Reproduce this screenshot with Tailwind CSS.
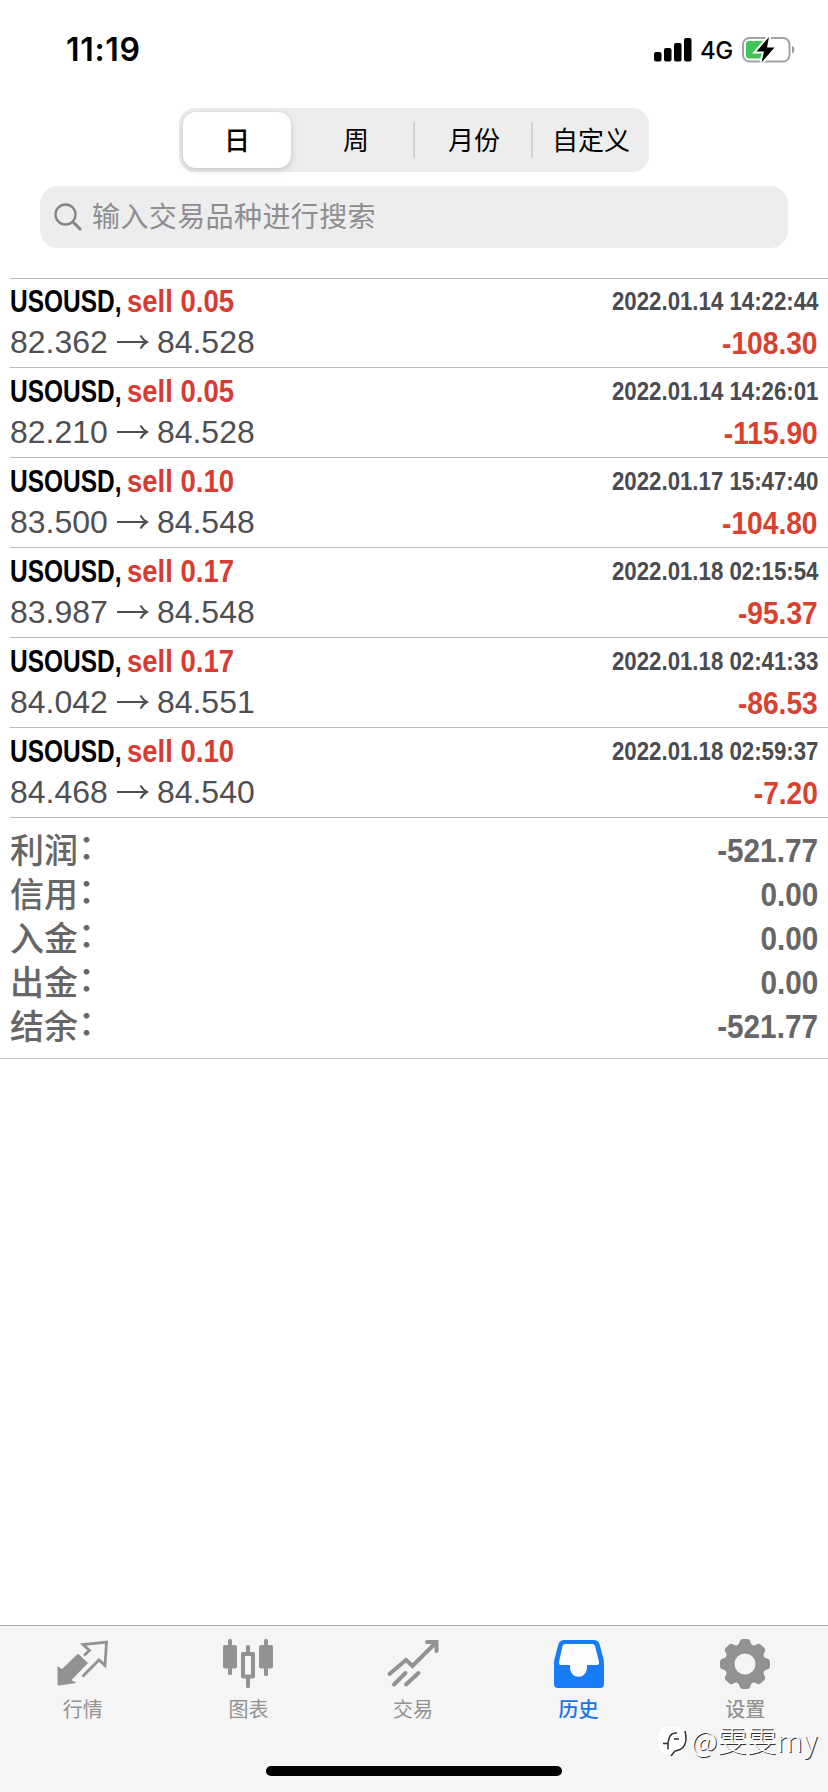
<!DOCTYPE html>
<html lang="zh-CN">
<head>
<meta charset="utf-8">
<title>历史</title>
<script src="https://cdn.jsdelivr.net/npm/@tailwindcss/browser@4"></script>
</head>
<body class="bg-white">
<div class="relative flex h-[1792px] w-[828px] flex-col overflow-hidden bg-white font-['Liberation_Sans','Noto_Sans_CJK_SC',sans-serif]">

  <!-- Status bar -->
  <header class="flex h-[108px] items-start justify-between pr-[32px] pl-[66px]">
    <div class="mt-[30px] font-['Inter',sans-serif] text-[32px] leading-[40px] font-semibold tracking-[0.7px] text-black">11:19</div>
    <div class="mt-[34px] flex h-8 items-center">
      <svg class="mr-[8px] h-[24px] w-[38px]" viewBox="0 0 38 24"><rect x="0" y="14" width="7.500" height="9.500" rx="2"/><rect x="10" y="10" width="7.500" height="13.500" rx="2"/><rect x="20" y="5" width="7.500" height="18.500" rx="2"/><rect x="30" y="0" width="7.500" height="23.500" rx="2"/></svg>
      <div class="mr-[8px] w-[34px] pt-0.5 font-['Inter',sans-serif] text-[24px] leading-8 font-medium tracking-[-0.6px] text-black">4G</div>
      <svg class="h-[28px] w-[54px]" viewBox="0 0 54 28"><rect x="1" y="2" width="46.500" height="23.500" rx="6.500" fill="white" stroke="#a2a2a2" stroke-width="2"/><path d="M7 5h15v17.500H7a3 3 0 0 1-3-3V8a3 3 0 0 1 3-3z" fill="#41c45b"/><path d="M50 10c3 .8 3 6.500 0 7.500z" fill="#999"/><path d="M27 1L14.500 15.500h7.500L19.500 26.500 32.500 11.500h-7.500z" fill="#000" stroke="#fff" stroke-width="4" paint-order="stroke"/></svg>
    </div>
  </header>

  <!-- Period selector -->
  <div class="mx-auto flex h-[64px] w-[470px] items-center rounded-[16px] bg-[#ededed] text-[26px] text-black">
    <div class="ml-[4px] flex h-[56px] w-[108px] items-center justify-center rounded-[13px] bg-white pt-0.5 font-medium shadow-[0_2px_7px_rgba(0,0,0,0.18)]">日</div>
    <div class="flex h-9 w-[124px] items-center justify-center border-r-2 border-[#d2d2d3] pt-0.5 pl-2">周</div>
    <div class="flex h-9 w-[118px] items-center justify-center border-r-2 border-[#d2d2d3] pt-0.5 pl-0.5">月份</div>
    <div class="flex h-9 w-[116px] items-center justify-center pt-0.5">自定义</div>
  </div>

  <!-- Search -->
  <div class="mx-[40px] mt-[14px] flex h-[62px] items-center rounded-[18px] bg-[#ededee] text-[#8e8e92]">
    <svg class="ml-[14px] h-[28px] w-[28px]" viewBox="0 0 28 28" fill="none" stroke="#858588" stroke-linecap="round"><circle cx="11.500" cy="11.500" r="10" stroke-width="2.300"/><path d="M19 19l7 7" stroke-width="3"/></svg>
    <span class="ml-[10px] pt-0.5 text-[28px] tracking-[0.4px]">输入交易品种进行搜索</span>
  </div>

  <!-- Deals -->
  <main id="deals" class="mt-[30px] ml-[10px] flex flex-col"></main>

  <!-- Totals -->
  <section id="totals" class="flex h-[241px] flex-col border-b border-[#c3c3c6] pt-[10px] text-[#666]"></section>

  <div class="flex-1"></div>

  <!-- Tab bar -->
  <nav class="grid h-[167px] grid-cols-5 border-t border-[#a9a9aa] bg-[#f5f5f5] text-[20px] text-[#929292]">
    <div class="flex flex-col items-center pt-[12px]">
      <svg class="h-[54px] w-[54px]" viewBox="0 0 54 54"><path d="M1.500 28l4.500 3L21 16.500q1-1 2 0l9 8.500L15.500 42l5 3L3 47.500q-1.500 0-1.500-1.500z" fill="#929292"/><path d="M28 17.500l5.500-5L27 6.500 50.500 4l-1.500 23.500-6-5.500L26.500 38.500" fill="none" stroke="#929292" stroke-width="2.800"/></svg>
      <span class="mt-px leading-[34px]">行情</span>
    </div>
    <div class="flex flex-col items-center pt-[12px]">
      <svg class="h-[54px] w-[54px]" viewBox="0 0 54 54" fill="#929292"><rect x="7" y="1" width="4" height="36" rx="1.500"/><rect x="2" y="7" width="14" height="23.500" rx="2"/><rect x="43" y="1" width="4" height="37" rx="1.500"/><rect x="38" y="7" width="14" height="23.500" rx="2"/><rect x="25" y="7" width="4" height="43" rx="1.500"/><rect x="20" y="14" width="14" height="26.500" rx="2"/><rect x="24" y="18" width="6" height="18.500" fill="#f5f5f5"/></svg>
      <span class="mt-px leading-[34px]">图表</span>
    </div>
    <div class="flex flex-col items-center pt-[12px]">
      <svg class="mr-0.5 h-[54px] w-[54px]" viewBox="0 0 54 54" fill="none" stroke="#929292" stroke-width="4" stroke-linecap="round"><path d="M3.500 36L20 22l6.500 6L49.500 5M8 46.500L19.500 35M20 46.500L32.500 35"/><path d="M41 4h9.500v9"/></svg>
      <span class="mt-px mr-0.5 leading-[34px]">交易</span>
    </div>
    <div class="flex flex-col items-center pt-[12px] text-[#1a73e8]">
      <svg class="mr-0.5 h-[54px] w-[54px]" viewBox="0 0 54 54"><path fill="#177cf5" fill-rule="evenodd" d="M12 2h30q4 0 5.500 4l4 15q.5 2 .5 5v20q0 4-4 4H6q-4 0-4-4V26q0-3 .5-5l4-15Q8 2 12 2z"/><path fill="#fdfdfd" d="M13.500 6q-2.500 0-3 2L7 24q-.5 3 2 3h9v2c0 13 17 13 17 0v-2h10q2.500 0 2-3L43 8q-.5-2-3-2z"/></svg>
      <span class="mt-px mr-0.5 leading-[34px] font-medium">历史</span>
    </div>
    <div class="flex flex-col items-center pt-[12px]">
      <svg class="h-[54px] w-[54px]" viewBox="-27 -26 54 54"><g fill="#929292"><circle r="20"/><g id="pair"><path id="tooth" d="M-10-17Q-6-19-5.500-22Q-5-25-2-25H2Q5-25 5.500-22Q6-19 10-17z"/><use href="#tooth" transform="rotate(180)"/></g><use href="#pair" transform="rotate(45)"/><use href="#pair" transform="rotate(90)"/><use href="#pair" transform="rotate(135)"/></g><circle r="10.500" fill="#f5f5f5"/></svg>
      <span class="mt-px leading-[34px] font-medium">设置</span>
    </div>
  </nav>

  <!-- Home indicator and author mark float over the tab bar -->
  <div class="absolute bottom-[16px] left-[266px] h-[10px] w-[296px] rounded-full bg-black"></div>
  <div class="absolute top-[1719px] left-[657px] flex h-[40px] items-center text-white">
    <svg class="mt-2 h-[34px] w-[32px]" viewBox="0 0 32 34"><rect x="1" y="1" width="27" height="27" rx="11" fill="white"/><path d="M6 17.500h5c1-7 2.500-11 9-10.500M11 17.500v6M17 13h5M28 5c3 12-1 19-10 20l-4 5" fill="none" stroke="#333" stroke-width="1.500"/></svg>
    <span class="ml-0.5 font-['Noto_Sans_CJK_SC',sans-serif] text-[29px] leading-[40px] font-light tracking-[0.4px] whitespace-nowrap [text-shadow:1px_1px_0_#333]">@雯雯my</span>
  </div>
</div>

<script>
const deals = [
  ["0.05", "82.362", "84.528", "2022.01.14 14:22:44", "-108.30"],
  ["0.05", "82.210", "84.528", "2022.01.14 14:26:01", "-115.90"],
  ["0.10", "83.500", "84.548", "2022.01.17 15:47:40", "-104.80"],
  ["0.17", "83.987", "84.548", "2022.01.18 02:15:54", "-95.37"],
  ["0.17", "84.042", "84.551", "2022.01.18 02:41:33", "-86.53"],
  ["0.10", "84.468", "84.540", "2022.01.18 02:59:37", "-7.20"]
];
document.getElementById("deals").innerHTML = deals.map(([lots, open, close, time, profit]) => `
  <article class="flex h-[90px] flex-col border-t border-[#bdbdbf] pt-[3px] pr-[10px] first:h-[89px] first:pt-[2px] last:h-[91px] last:border-b">
    <div class="flex h-[40px] items-center justify-between font-bold whitespace-nowrap">
      <div class="flex text-[32px] leading-[40px]">
        <div class="w-[117px]"><span class="inline-block origin-left scale-x-[0.765] text-black">USOUSD,</span></div>
        <div><span class="inline-block origin-left scale-x-[0.86] text-[#d63c34]">sell ${lots}</span></div>
      </div>
      <span class="inline-block origin-right scale-x-[0.855] text-[26px] leading-[40px] text-[#4b4b4f]">${time}</span>
    </div>
    <div class="flex h-[42px] items-center justify-between text-[32px] leading-[42px] whitespace-nowrap">
      <div class="flex items-center text-[#4f4f52]">
        <span>${open}</span>
        <svg class="mr-[8px] ml-[9px] h-[16px] w-[32px]" viewBox="0 0 32 16" fill="none" stroke="#4f4f52" stroke-width="2"><path d="M0 8h30M23.500 1.500Q26 6 30 8Q26 10 23.500 14.500"/></svg>
        <span>${close}</span>
      </div>
      <span class="mt-0.5 inline-block origin-right scale-x-[0.88] font-bold text-[#d9412f]">${profit}</span>
    </div>
  </article>`).join("");

const totals = [["利润", "-521.77"], ["信用", "0.00"], ["入金", "0.00"], ["出金", "0.00"], ["结余", "-521.77"]];
document.getElementById("totals").innerHTML = totals.map(([label, value]) => `
  <div class="flex h-[44px] items-center justify-between pr-[10px] pl-[10px]">
    <span class="-mt-0.5 flex font-['Noto_Sans_CJK_SC',sans-serif] text-[34px] leading-[44px] font-medium">${label}<span class="-mt-1">：</span></span>
    <span class="mt-px inline-block origin-right scale-x-[0.9] text-[33px] leading-[44px] font-bold">${value}</span>
  </div>`).join("");
</script>
</body>
</html>
